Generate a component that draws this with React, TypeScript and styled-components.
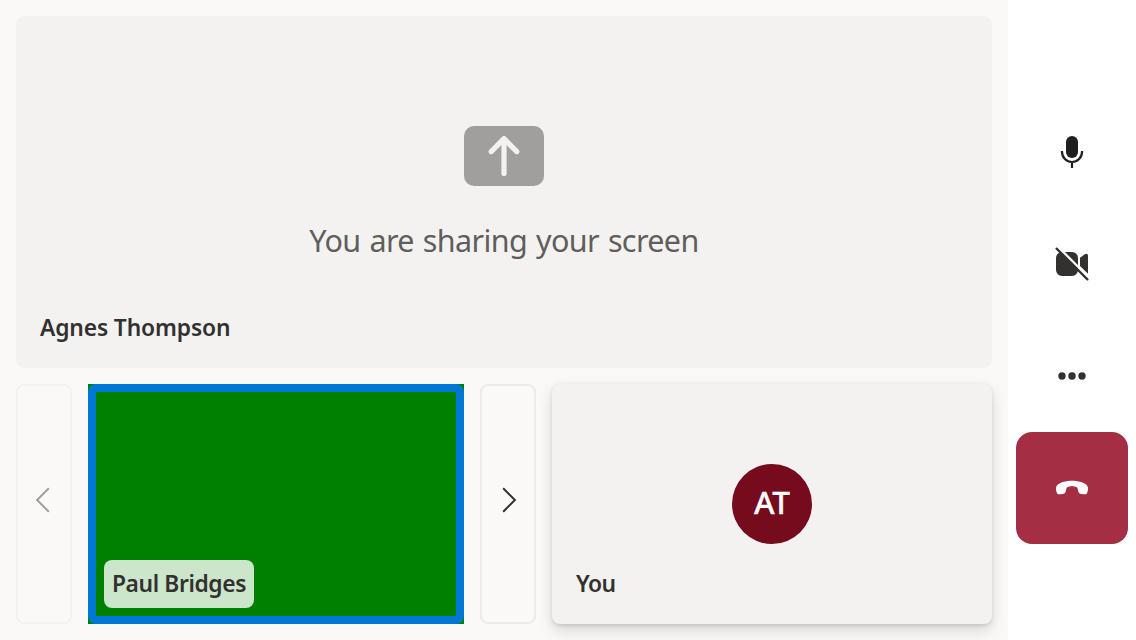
import React from "react";
import styled, { createGlobalStyle } from "styled-components";

const GlobalStyle = createGlobalStyle`
  * { box-sizing: border-box; }
  body {
    margin: 0;
    overflow: hidden;
    background: #faf9f8;
    color: #323130;
    font-family: "Segoe UI", "Noto Sans", "Open Sans", sans-serif;
  }
`;

const CallScreen = styled.div`
  display: flex;
  width: 1136px;
  height: 640px;
`;

const Stage = styled.main`
  flex: 1;
  display: flex;
  flex-direction: column;
  gap: 16px;
  padding: 16px;
`;

const Tile = styled.section<{ $raised?: boolean }>`
  position: relative;
  display: flex;
  flex-direction: column;
  align-items: center;
  background: #f3f2f1;
  border-radius: 8px;
  box-shadow: ${(p) =>
    p.$raised
      ? "0 6.4px 14.4px rgba(0,0,0,.132), 0 1.2px 3.6px rgba(0,0,0,.108)"
      : "none"};
`;

const ShareTile = styled(Tile)`
  height: 352px;
  padding-top: 110px;
`;

const SelfTile = styled(Tile)`
  flex: 1;
  justify-content: center;
`;

const ShareMessage = styled.p`
  margin: 32px 0 0;
  color: #605e5c;
  font-size: 30.5px;
  line-height: 44px;
  white-space: nowrap;
  letter-spacing: -0.62px;
  word-spacing: 1.6px;
`;

const NameLabel = styled.span<{ $boxed?: boolean; $spacing: number }>`
  position: absolute;
  left: ${(p) => (p.$boxed ? 8 : 16)}px;
  bottom: ${(p) => (p.$boxed ? 8 : 16)}px;
  height: 48px;
  padding: 0 8px;
  border-radius: 8px;
  background: ${(p) => (p.$boxed ? "rgba(255,255,255,.8)" : "transparent")};
  font-size: 22.8px;
  font-weight: 600;
  line-height: 47px;
  white-space: nowrap;
  letter-spacing: ${(p) => p.$spacing}px;
`;

const Gallery = styled.div`
  flex: 1;
  display: flex;
  gap: 16px;
`;

const PageButton = styled.button`
  display: flex;
  align-items: center;
  justify-content: center;
  width: 56px;
  padding: 0 0 8px;
  border: 2px solid #edebe9;
  border-radius: 8px;
  background: transparent;
  color: #323130;
  &:disabled {
    border-color: #f3f2f1;
    color: #a19f9d;
  }
`;

const VideoTile = styled.div`
  width: 376px;
  background: #008000;
`;

const SpeakingFrame = styled.div`
  position: relative;
  height: 100%;
  border: 8px solid #0078d4;
  border-radius: 8px;
`;

const Avatar = styled.div`
  width: 80px;
  height: 80px;
  border-radius: 50%;
  background: #750b1c;
  color: #fff;
  font-size: 31.5px;
  font-weight: 500;
  line-height: 76px;
  text-align: center;
  -webkit-text-stroke: 0.3px #fff;
`;

const ControlBar = styled.aside`
  display: flex;
  flex-direction: column;
  align-items: center;
  justify-content: center;
  width: 128px;
  background: #fff;
`;

const ControlButton = styled.button<{ $danger?: boolean }>`
  display: flex;
  align-items: center;
  justify-content: center;
  width: 112px;
  height: 112px;
  padding: 0;
  border: 0;
  border-radius: 16px;
  background: ${(p) => (p.$danger ? "#a42e43" : "transparent")};
  color: ${(p) => (p.$danger ? "#fff" : "#323130")};
`;

const Icon = styled.svg`
  display: block;
  width: 40px;
  height: 40px;
`;

const ShareIcon = () => (
  <svg width="80" height="60" viewBox="0 0 80 60">
    <rect width="80" height="60" rx="10" fill="#a19f9d" />
    <path
      d="M27.2 25.6 40 12.7l12.8 12.9M40 12.7v34.8"
      fill="none"
      stroke="#f3f2f1"
      strokeWidth="5.2"
      strokeLinecap="round"
      strokeLinejoin="round"
    />
  </svg>
);

const Chevron = ({ points }: { points: string }) => (
  <svg width="52" height="40" viewBox="0 0 52 40">
    <polyline points={points} fill="none" stroke="currentColor" strokeWidth="2" />
  </svg>
);

const MicIcon = () => (
  <Icon viewBox="0 0 20 20" color="#201f1e">
    <rect x="7" y="2" width="6" height="11" rx="3" fill="currentColor" />
    <path d="M5 9.5v.5a5 5 0 0 0 10 0v-.5M10 15v3" fill="none" stroke="currentColor" strokeWidth="1.1" />
  </Icon>
);

const CameraOffIcon = () => (
  <Icon viewBox="0 0 20 20">
    <path
      fill="currentColor"
      d="M5 4h5a3 3 0 0 1 3 3v6a3 3 0 0 1-3 3H5a3 3 0 0 1-3-3V7a3 3 0 0 1 3-3ZM14 6.9l2.2-1.700q1.800-1 1.800.8v8.900l-4-3.900Z"
    />
    <path d="m3.1 1.500 16 16" stroke="#fff" strokeWidth="1.2" />
    <path d="m2.3 2.3 15.4 15.4" stroke="currentColor" strokeWidth="1.1" strokeLinecap="round" />
  </Icon>
);

const MoreIcon = () => (
  <Icon viewBox="0 0 20 20" fill="currentColor">
    <circle cx="5" cy="10" r="1.85" />
    <circle cx="10" cy="10" r="1.85" />
    <circle cx="15" cy="10" r="1.85" />
  </Icon>
);

const EndCallIcon = () => (
  <Icon viewBox="0 0 40 40">
    <path
      fill="currentColor"
      d="M20 12.8c7.2 0 14.3 2.1 15.8 6.200.6 1.700.1 4-.6 5.700-.5 1.200-1.500 1.700-2.900 1.500l-3-.2c-1.600-.2-2.600-1-3-2.500l-.8-3.300c-.3-1.300-3.500-1.900-5.500-1.900s-5.200.6-5.500 1.900l-.8 3.300c-.4 1.500-1.400 2.300-3 2.500l-3 .2c-1.400.2-2.400-.3-2.900-1.500-.7-1.700-1.200-4-.6-5.700 1.500-4.100 8.600-6.200 15.800-6.200Z"
    />
  </Icon>
);

export default function App() {
  return (
    <>
      <GlobalStyle />
      <CallScreen>
        <Stage>
          <ShareTile>
            <ShareIcon />
            <ShareMessage>You are sharing your screen</ShareMessage>
            <NameLabel $spacing={-0.13}>Agnes Thompson</NameLabel>
          </ShareTile>
          <Gallery>
            <PageButton disabled aria-label="Previous page">
              <Chevron points="30.8,8.3 19.1,20 30.8,31.7" />
            </PageButton>
            <VideoTile>
              <SpeakingFrame>
                <NameLabel $boxed $spacing={-0.4}>Paul Bridges</NameLabel>
              </SpeakingFrame>
            </VideoTile>
            <PageButton aria-label="Next page">
              <Chevron points="21.2,8.3 32.9,20 21.2,31.7" />
            </PageButton>
            <SelfTile $raised>
              <Avatar>AT</Avatar>
              <NameLabel $spacing={-0.6}>You</NameLabel>
            </SelfTile>
          </Gallery>
        </Stage>
        <ControlBar>
          <ControlButton aria-label="Mute"><MicIcon /></ControlButton>
          <ControlButton aria-label="Turn camera on"><CameraOffIcon /></ControlButton>
          <ControlButton aria-label="More options"><MoreIcon /></ControlButton>
          <ControlButton $danger aria-label="Leave call"><EndCallIcon /></ControlButton>
        </ControlBar>
      </CallScreen>
    </>
  );
}
